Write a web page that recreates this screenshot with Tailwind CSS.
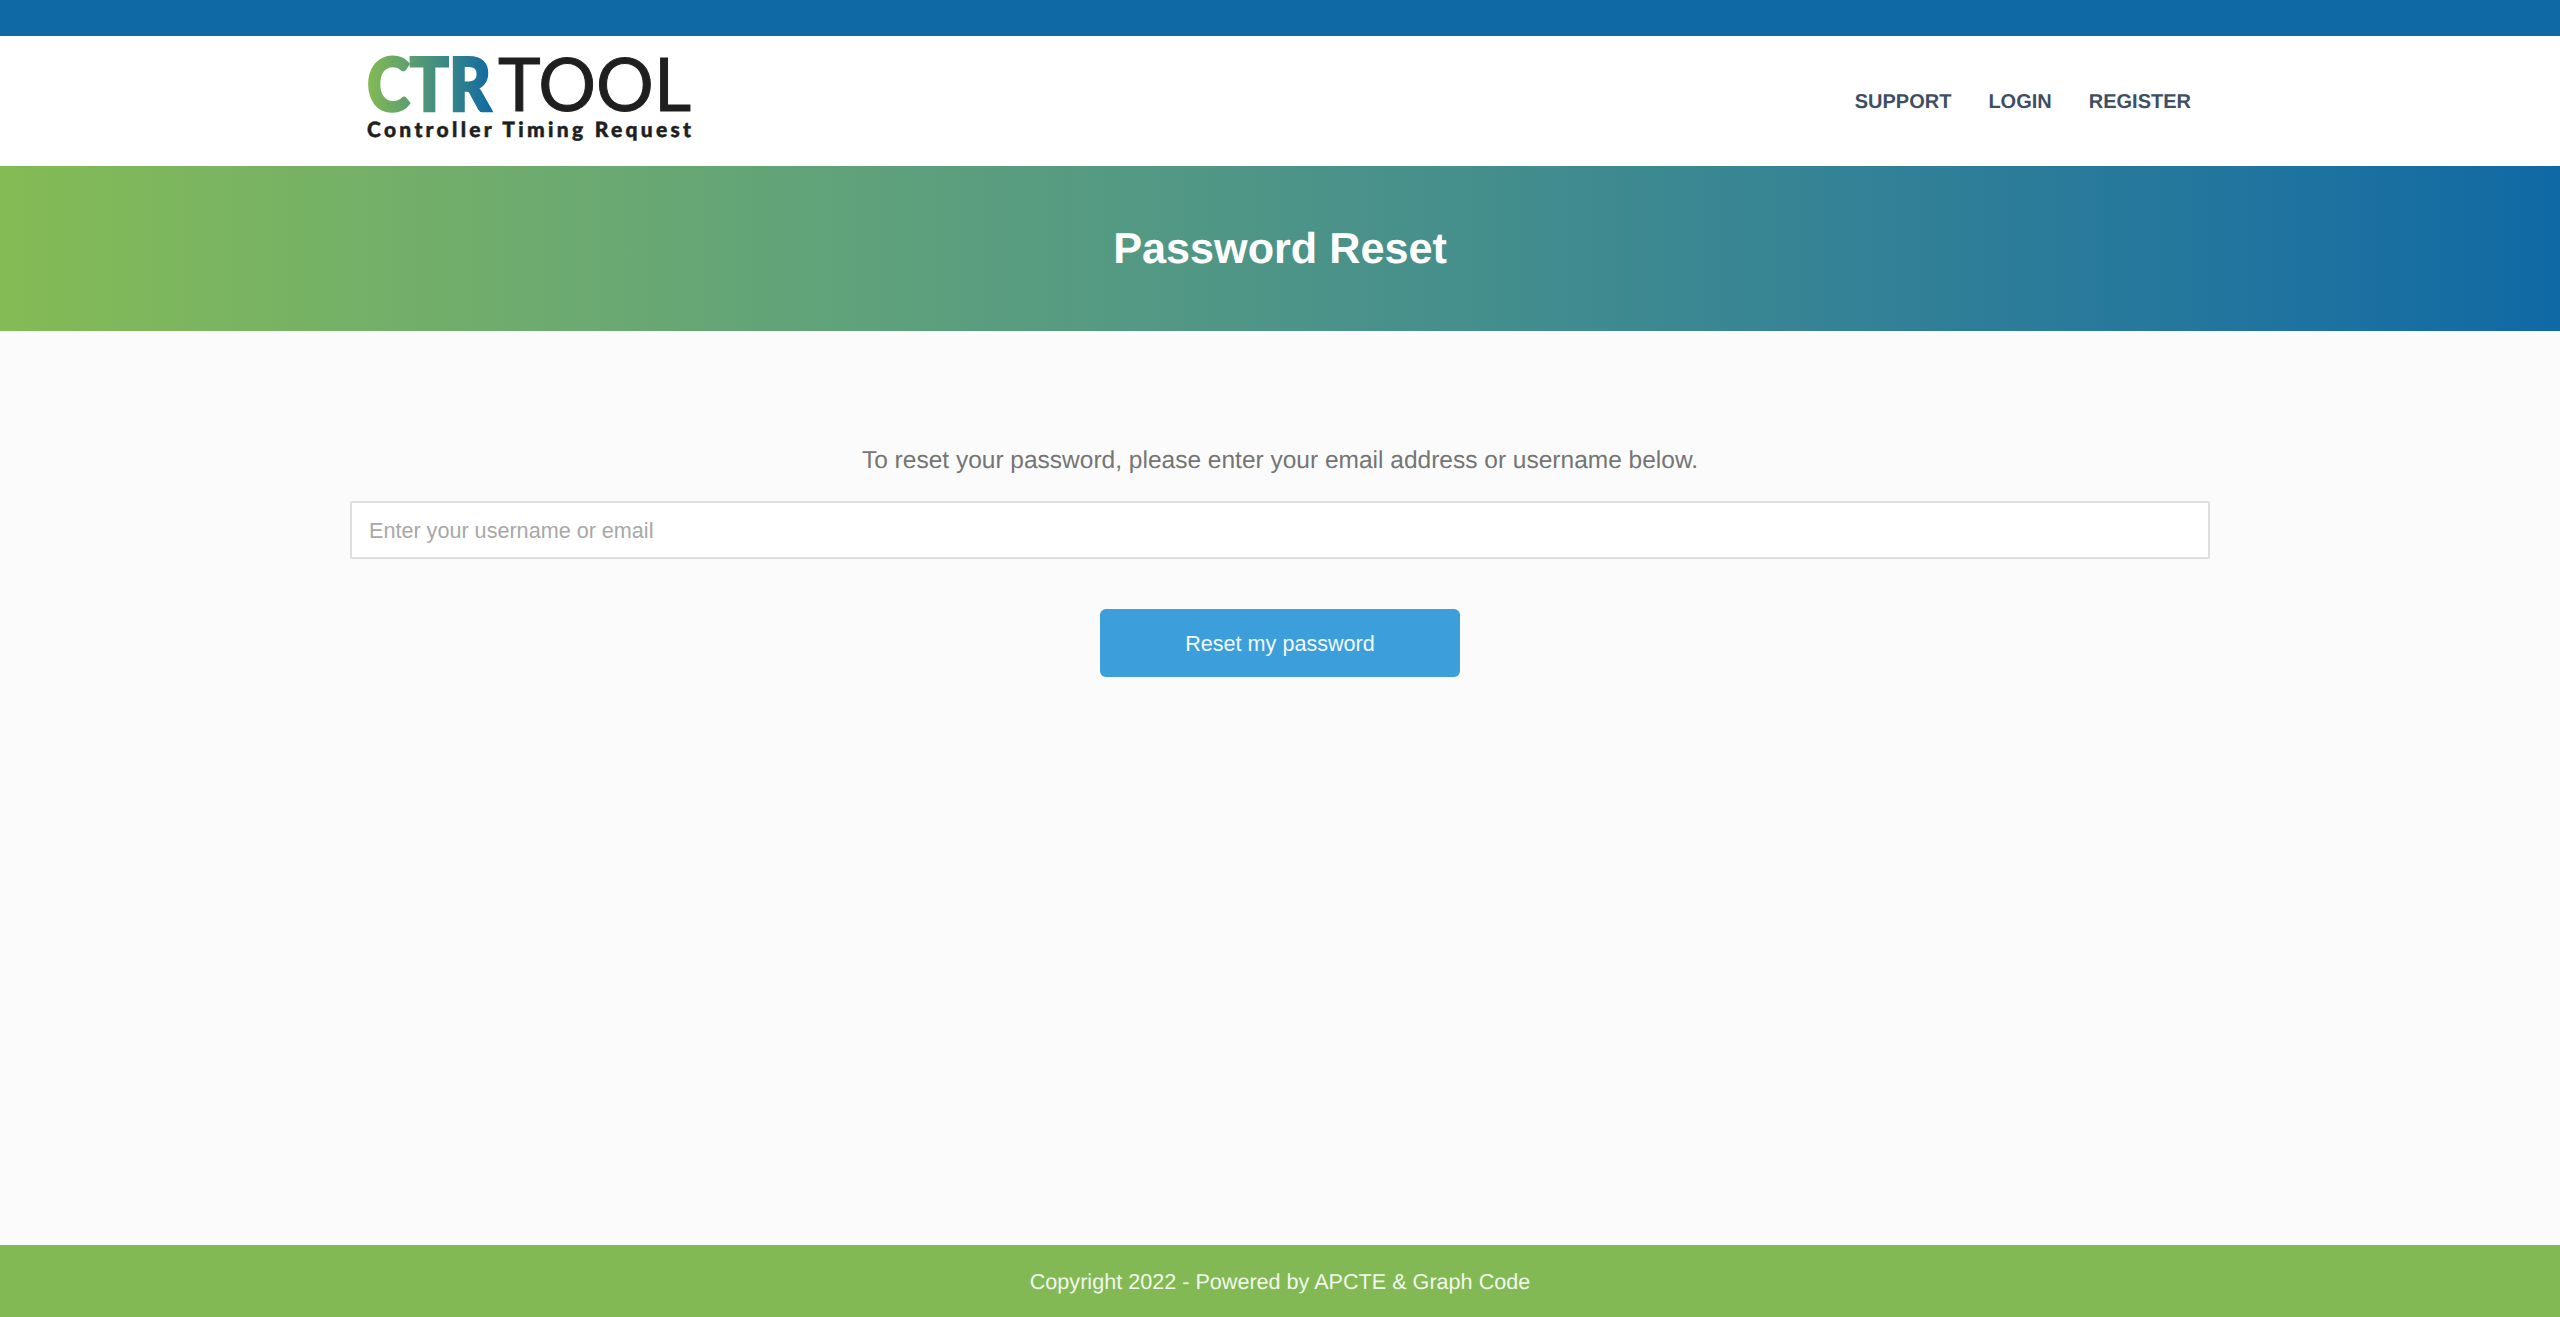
<!DOCTYPE html>
<html lang="en">
<head>
  <meta charset="UTF-8" />
  <meta name="viewport" content="width=device-width, initial-scale=1.0" />
  <title>Password Reset | CTR Tool</title>
  <script src="https://cdn.jsdelivr.net/npm/@tailwindcss/browser@4"></script>
</head>
<body class="bg-[#fbfbfb] flex flex-col h-screen overflow-hidden font-['Liberation_Sans',Arial,sans-serif] [text-rendering:geometricPrecision]">

  <!-- Top bar -->
  <div class="h-[36px] shrink-0 bg-[#0f69a4]"></div>

  <!-- Header -->
  <header class="h-[130px] shrink-0 bg-white">
    <div class="w-[1860px] h-full mx-auto flex items-center justify-between pl-[17px] pr-[19px]">
      <svg width="326" height="100" viewBox="0 0 326 100" class="block overflow-visible">
        <defs>
          <linearGradient id="ctrGradient" gradientUnits="userSpaceOnUse" x1="0" y1="0" x2="126" y2="0">
            <stop offset="0" stop-color="#84bb54" />
            <stop offset="1" stop-color="#0f69a4" />
          </linearGradient>
        </defs>
        <text x="0" y="60" textLength="124" lengthAdjust="spacingAndGlyphs" fill="url(#ctrGradient)" stroke="url(#ctrGradient)" stroke-width="2.5" font-family="Lato, sans-serif" font-weight="900" font-size="74">CTR</text>
        <text x="131" y="60" textLength="193" lengthAdjust="spacingAndGlyphs" fill="#1f1f1f" stroke="#1f1f1f" stroke-width="1" font-family="Lato, sans-serif" font-weight="400" font-size="74">TOOL</text>
        <text x="0" y="86" textLength="324" lengthAdjust="spacing" fill="#1f1f1f" stroke="#1f1f1f" stroke-width="0.5" font-family="Lato, sans-serif" font-weight="900" font-size="21">Controller Timing Request</text>
      </svg>
      <nav class="flex items-center gap-[37px] text-[20px] font-bold text-[#3f4f63] pt-[1px]">
        <a href="#">SUPPORT</a>
        <a href="#">LOGIN</a>
        <a href="#">REGISTER</a>
      </nav>
    </div>
  </header>

  <!-- Banner -->
  <div class="h-[165px] shrink-0 flex items-center justify-center bg-gradient-to-r from-[#84bb54] to-[#0f69a4]">
    <h1 class="text-[43.2px] font-bold text-white leading-none pt-[2px]">Password Reset</h1>
  </div>

  <!-- Form -->
  <main class="flex-1 w-[1860px] mx-auto pt-[116px]">
    <p class="text-[24.5px] leading-[28px] text-[#757575] text-center">To reset your password, please enter your email address or username below.</p>
    <input type="text" placeholder="Enter your username or email"
      class="block w-full h-[58px] mt-[26px] px-[17px] pt-[1px] bg-white border-2 border-[#dedede] rounded-[2px] text-[21.6px] placeholder:text-[#a8a8a8]" />
    <button class="block w-[360px] h-[68px] mx-auto mt-[50px] pt-[2px] bg-[#3c9fdc] rounded-[6px] text-[21.6px] text-[#f2f9fd]">Reset my password</button>
  </main>

  <!-- Footer -->
  <footer class="h-[72px] shrink-0 flex items-center justify-center pt-[2px] bg-[#82b955] text-[21.6px] text-[#f2f8ea]">
    Copyright 2022 - Powered by APCTE &amp; Graph Code
  </footer>

</body>
</html>
